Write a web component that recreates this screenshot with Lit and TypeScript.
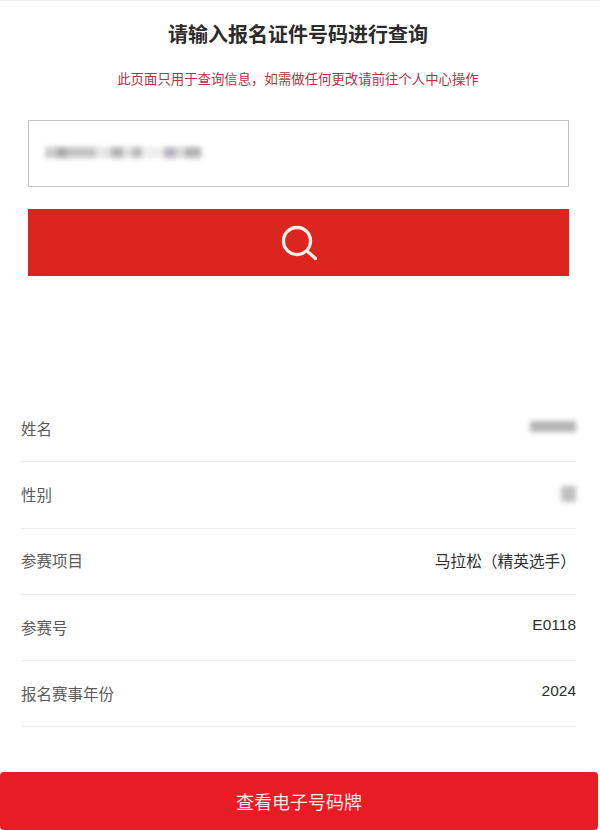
import { LitElement, html, css } from "lit";
import { customElement } from "lit/decorators.js";

@customElement("app-root")
export class AppRoot extends LitElement {
  static styles = css`
    :host {
      display: block;
      width: 600px;
      height: 830px;
      box-sizing: border-box;
      background: #fff;
      border-top: 1px solid #ececec;
      font-family: "Noto Sans CJK SC", "Liberation Sans", sans-serif;
      overflow: hidden;
    }
    .page { display: flex; flex-direction: column; height: 829px; }
    h1 {
      margin: 0;
      padding: 19px 4px 0 0;
      height: 28px;
      line-height: 28px;
      font-size: 20px;
      font-weight: 700;
      color: #2b2b2b;
      text-align: center;
    }
    .note {
      margin: 20px 0 0;
      padding-right: 4px;
      height: 20px;
      line-height: 20px;
      font-size: 13.4px;
      color: #b8323f;
      text-align: center;
    }
    .form {
      padding: 32px 31px 0 28px;
      display: flex;
      flex-direction: column;
      gap: 22px;
    }
    .input {
      height: 67px;
      box-sizing: border-box;
      border: 1px solid #c4c4c4;
      display: flex;
      align-items: center;
      padding-left: 16px;
    }
    .blur { display: block; }
    .blur-id {
      width: 156px;
      height: 11px;
      margin-top: -2px;
      filter: blur(2.5px);
      background: linear-gradient(90deg, #ccc 0 8%, #aaa 8% 14%, #c4c4c4 14% 32%, #e4e4e4 32% 42%, #b4b4b4 42% 50%, #e0e0e0 50% 56%, #bbb 56% 62%, #eee 62% 76%, #b8b4c0 76% 84%, #ddd 84% 90%, #b4b4b4 90% 100%);
    }
    .search {
      height: 67px;
      background: #dc251f;
      display: flex;
      align-items: center;
      justify-content: center;
    }
    .search svg { width: 36px; height: 36px; }
    .rows {
      margin: 120px 24px 0 21px;
      display: flex;
      flex-direction: column;
    }
    .row {
      height: 66.3px;
      box-sizing: border-box;
      border-bottom: 1px solid #ececec;
      display: flex;
      align-items: center;
      justify-content: space-between;
      font-size: 15.5px;
      color: #5a5a5a;
    }
    .label { margin-top: -2px; }
    .value { color: #2f2f2f; margin-top: -1px; font-size: 15.7px; }
    .num {
      font-family: "Liberation Sans", sans-serif;
      font-size: 15.5px;
      padding-bottom: 5px;
    }
    .blur-name {
      width: 46px;
      height: 11px;
      margin-top: -4px;
      background: #b4b4b4;
      filter: blur(2.5px);
    }
    .blur-sex {
      width: 15px;
      height: 16px;
      margin-top: -2px;
      background: #c0c0c0;
      filter: blur(2.5px);
    }
    .spacer { flex: 1; }
    .cta {
      height: 58px;
      margin-right: 2px;
      background: #e81c24;
      border-radius: 4px;
      display: flex;
      align-items: center;
      justify-content: center;
      color: #fbeaea;
      font-size: 18px;
    }
  `;

  render() {
    return html`
      <div class="page">
        <h1>请输入报名证件号码进行查询</h1>
        <p class="note">此页面只用于查询信息，如需做任何更改请前往个人中心操作</p>
        <div class="form">
          <div class="input"><span class="blur blur-id"></span></div>
          <div class="search">
            <svg viewBox="0 0 36 36" fill="none" stroke="#fdf1ec" stroke-width="3.3" stroke-linecap="round">
              <circle cx="16" cy="16" r="13.5"></circle>
              <path d="M26 26 L34.5 33.5"></path>
            </svg>
          </div>
        </div>
        <div class="rows">
          <div class="row"><span class="label">姓名</span><span class="blur blur-name"></span></div>
          <div class="row"><span class="label">性别</span><span class="blur blur-sex"></span></div>
          <div class="row"><span class="label">参赛项目</span><span class="value">马拉松（精英选手）</span></div>
          <div class="row"><span class="label">参赛号</span><span class="value num">E0118</span></div>
          <div class="row"><span class="label">报名赛事年份</span><span class="value num">2024</span></div>
        </div>
        <div class="spacer"></div>
        <div class="cta">查看电子号码牌</div>
      </div>
    `;
  }
}
